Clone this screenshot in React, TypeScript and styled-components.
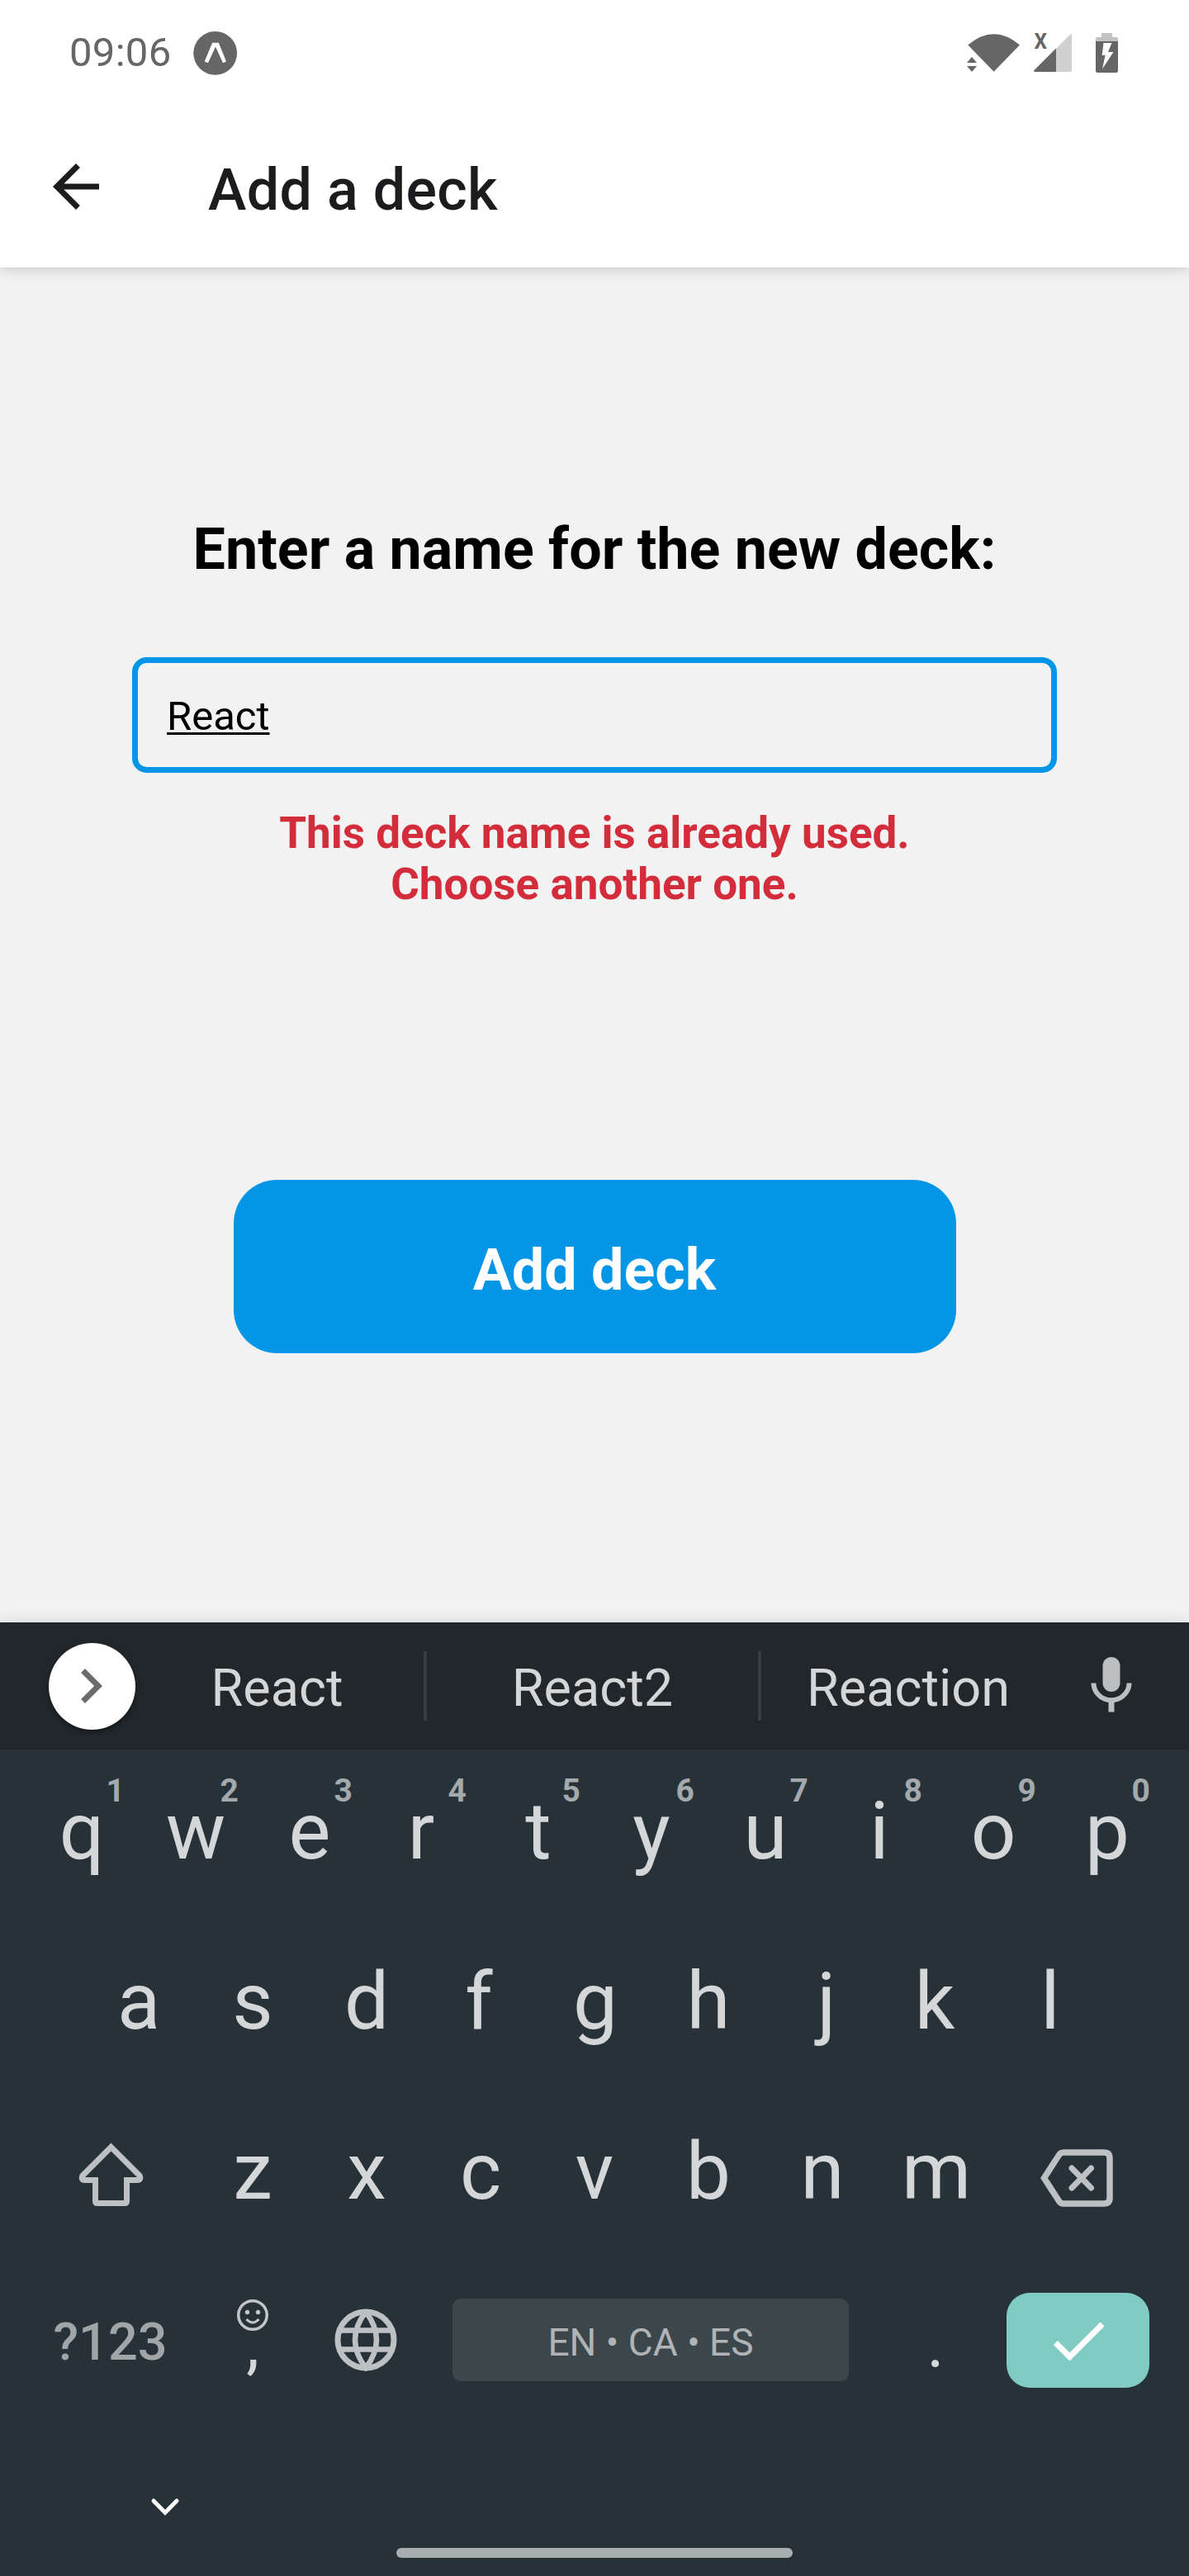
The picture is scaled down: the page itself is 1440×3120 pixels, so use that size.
import React from "react";
import styled, { createGlobalStyle } from "styled-components";

const Global = createGlobalStyle`
  * { box-sizing: border-box; }
  body { margin: 0; background: #f2f2f2; }
  button { border: 0; padding: 0; background: none; font: inherit; color: inherit; }
`;

const Screen = styled.div`
  width: 1440px;
  height: 3120px;
  display: flex;
  flex-direction: column;
  background: #f2f2f2;
  font-family: Roboto, "Liberation Sans", sans-serif;
  color: #000;
  overflow: hidden;
`;

const TopArea = styled.div`
  background: #fff;
  height: 324px;
  flex: none;
  z-index: 1;
  box-shadow: 0 4px 14px rgba(0, 0, 0, 0.13), 0 0 3px rgba(0, 0, 0, 0.08);
`;

const StatusBar = styled.div`
  height: 128px;
  padding: 0 80px 0 84px;
  display: flex;
  align-items: center;
  justify-content: space-between;
  color: #666;
`;

const StatusGroup = styled.div<{ $gap: number }>`
  display: flex;
  align-items: center;
  gap: ${(p) => p.$gap}px;
`;

const Clock = styled.span`
  font-size: 49px;
  line-height: 58px;
  width: 122px;
  letter-spacing: 0.3px;
  white-space: nowrap;
`;

const Header = styled.header`
  height: 196px;
  display: flex;
  align-items: center;
  padding: 0 50px 0 50px;
  gap: 118px;
`;

const Title = styled.h1`
  margin: 8px 0 0;
  font-size: 70px;
  line-height: 82px;
  font-weight: 500;
  letter-spacing: 0.3px;
  color: #1c1c1e;
`;

const Form = styled.main`
  flex: 1;
  display: flex;
  flex-direction: column;
  align-items: center;
  padding-top: 300px;
`;

const Prompt = styled.h2`
  margin: 0;
  font-size: 70px;
  line-height: 82px;
  font-weight: 700;
  white-space: nowrap;
`;

const NameField = styled.div`
  margin-top: 90px;
  width: 1120px;
  height: 140px;
  border: 7px solid #0396e6;
  border-radius: 17.5px;
  padding: 4px 35px 0;
  display: flex;
  align-items: center;
  font-size: 49px;
  line-height: 58px;
  span {
    text-decoration: underline;
    text-decoration-thickness: 3px;
    text-underline-offset: 3px;
    text-decoration-skip-ink: none;
  }
`;

const ErrorText = styled.p`
  margin: 42px 0 0;
  font-size: 53px;
  line-height: 62px;
  font-weight: 700;
  text-align: center;
  color: #d32d3c;
`;

const SubmitButton = styled.button`
  margin-top: 327px;
  width: 875px;
  height: 210px;
  border-radius: 52.5px;
  background: #0396e6;
  color: #fff;
  font-size: 70px;
  line-height: 82px;
  font-weight: 700;
  padding-top: 7px;
`;

const Keyboard = styled.section`
  height: 1155px;
  flex: none;
  display: flex;
  flex-direction: column;
  background: #263238;
  color: #d4d6d8;
  box-shadow: 0 0 18px rgba(0, 0, 0, 0.12);
`;

const Strip = styled.div`
  height: 154px;
  flex: none;
  display: flex;
  align-items: center;
  background: #21272b;
  padding-left: 59px;
`;

const ExpandButton = styled.button`
  width: 105px;
  height: 105px;
  border-radius: 50%;
  background: #fff;
  box-shadow: 0 3px 6px rgba(0, 0, 0, 0.4);
  display: flex;
  align-items: center;
  justify-content: center;
  padding-right: 4px;
`;

const Suggestion = styled.div<{ $width: number; $trail?: number }>`
  width: ${(p) => p.$width}px;
  text-align: center;
  font-size: 63px;
  line-height: 74px;
  padding: 5px ${(p) => p.$trail ?? 0}px 0 0;
`;

const Divider = styled.div`
  width: 4px;
  height: 84px;
  background: #373d40;
`;

const MicButton = styled.button`
  margin-left: 26px;
  height: 84px;
  svg { display: block; }
`;

const Row = styled.div<{ $inset: number }>`
  height: 206px;
  flex: none;
  display: flex;
  padding: 0 ${(p) => p.$inset}px;
`;

const Key = styled.button`
  position: relative;
  width: 138px;
  height: 206px;
  flex: none;
  display: flex;
  align-items: center;
  justify-content: center;
`;

const LetterKey = styled(Key)<{ $nudge: number }>`
  font-size: 96px;
  line-height: 112px;
  padding-bottom: 8px;
  padding-left: ${(p) => Math.max(0, p.$nudge) * 2}px;
  padding-right: ${(p) => Math.max(0, -p.$nudge) * 2}px;
`;

const Hint = styled.span`
  position: absolute;
  right: 17px;
  top: 27px;
  font-size: 39px;
  line-height: 46px;
  font-weight: 700;
  color: #a3a9ac;
`;

const ShiftKey = styled(Key)`
  width: 207px;
`;

const BackspaceKey = styled(Key)`
  width: 207px;
  padding: 7px 5px 0 0;
`;

const SymbolsKey = styled(Key)`
  width: 207px;
  padding-bottom: 7px;
  font-size: 63px;
  line-height: 74px;
  font-weight: 500;
  color: #a0a5a7;
`;

const CommaKey = styled(Key)`
  flex-direction: column;
  font-size: 80px;
  line-height: 34px;
  justify-content: flex-start;
  padding-top: 48px;
`;

const GlobeKey = styled(Key)`
  padding: 0 2px 12px 0;
`;

const PeriodKey = styled(Key)`
  font-size: 80px;
  line-height: 94px;
`;

const SpaceBar = styled.button`
  width: 480px;
  height: 100px;
  margin: 47px 36px 0 35px;
  padding-top: 5px;
  border-radius: 10px;
  background: #3c474c;
  color: #b0b4b7;
  font-size: 46px;
  line-height: 54px;
`;

const EnterKey = styled.button`
  width: 173px;
  height: 115px;
  margin: 40px 0 0 17px;
  border-radius: 28px;
  background: #80cbc4;
  display: flex;
  align-items: center;
  justify-content: center;
`;

const NavArea = styled.div`
  flex: 1;
  display: flex;
  flex-direction: column;
  justify-content: space-between;
  padding: 82px 0 22px;
`;

const HideButton = styled.button`
  width: 36px;
  margin-left: 182px;
  svg { display: block; }
`;

const HomeHandle = styled.div`
  width: 480px;
  height: 12px;
  margin: 0 auto;
  border-radius: 6px;
  background: #a8adaf;
`;

const AppBadge = () => (
  <svg width="54" height="54" viewBox="0 0 54 54">
    <circle cx="26.7" cy="27.3" r="26.4" fill="#666" />
    <path d="M23.2 14.7 H30.8 L40 37.5 L36 39.3 L27 19.5 L18 39.3 L13.7 37.5 Z" fill="#fff" />
  </svg>
);

const StatusIcons = () => (
  <svg width="190" height="68" viewBox="1170 30 190 68" fill="#666">
    <path d="M1172.3 54.5 Q1203.7 27.8 1235 54.5 L1203.6 86.7 Z" />
    <path d="M1171 76 L1177 69 L1183 76 Z M1171 80 H1183 L1177 87 Z" />
    <path d="M1298 43 V84.500 Q1298 87 1295.500 87 H1279 V59 L1296 41.800 Q1298 40.200 1298 43Z" fill="#d0d0d0" />
    <path d="M1279 58.500 V87 H1254 Q1251 87 1252.500 85 Z" />
    <text x="1252.500" y="59" fontSize="25" fontWeight="700" textLength="15.500" lengthAdjust="spacingAndGlyphs">X</text>
    <path d="M1327 50 V47 Q1327 45 1329 45 H1334 V40 H1347 V45 H1352 Q1354 45 1354 47 V50Z" fill="#c2c2c2" />
    <path d="M1327 50 H1354 V85.500 Q1354 88 1351.500 88 H1329.500 Q1327 88 1327 85.500Z" />
    <path d="M1336.500 52 H1346.500 L1342 63 H1348.500 L1335 83.500 L1338.500 67 H1334.700Z" fill="#fff" />
  </svg>
);

const BackIcon = () => (
  <svg width="84" height="84" viewBox="0 0 24 24" fill="#1c1c1e">
    <path d="M20 11H7.830l5.590-5.590L12 4l-8 8 8 8 1.410-1.410L7.830 13H20v-2z" />
  </svg>
);

const ChevronRight = () => (
  <svg width="84" height="84" viewBox="0 0 24 24" fill="#6b6b6b">
    <path d="M10 6 8.590 7.410 13.170 12l-4.580 4.590L10 18l6-6z" />
  </svg>
);

const MicIcon = () => (
  <svg width="84" height="84" viewBox="0 0 24 24" fill="#bcbfc1">
    <path d="M12 14c1.660 0 3-1.340 3-3V5c0-1.660-1.340-3-3-3S9 3.340 9 5v6c0 1.660 1.340 3 3 3z" />
    <path d="M17.300 11c0 3-2.540 5.100-5.300 5.100S6.700 14 6.700 11H5c0 3.410 2.720 6.230 6 6.720V21h2v-3.280c3.280-.480 6-3.300 6-6.720h-1.700z" />
  </svg>
);

const ShiftIcon = () => (
  <svg width="80" height="80" viewBox="0 0 80 80" fill="none" stroke="#bdc1c4" strokeWidth="7">
    <path d="M40.500 6.500 L75 41 Q77.500 46.500 72 46.500 H59.500 V72 Q59.500 74.500 57 74.500 H24 Q21.500 74.500 21.500 72 V46.500 H9 Q3.500 46.500 6 41 Z" />
  </svg>
);

const BackspaceIcon = () => (
  <svg width="88" height="72" viewBox="0 0 88 72" fill="none" stroke="#bdc1c4" strokeWidth="7.500">
    <path d="M4.500 36 L22 9 Q24 5 28 5 H77 Q84 5 84 12 V60 Q84 67 77 67 H28 Q24 67 22 63 Z" />
    <path d="M38 24 L61.500 48 M61.500 24 L38 48" strokeWidth="7" strokeLinecap="round" />
  </svg>
);

const SmileyIcon = () => (
  <svg width="38" height="38" viewBox="0 0 38 38" fill="none" stroke="#c3c6c9" strokeWidth="3.500">
    <circle cx="19" cy="19" r="17.250" />
    <circle cx="12.500" cy="15.500" r="2.700" fill="#c3c6c9" stroke="none" />
    <circle cx="25.500" cy="15.500" r="2.700" fill="#c3c6c9" stroke="none" />
    <path d="M11.500 24 Q19 32 26.500 24" strokeWidth="3" />
  </svg>
);

const GlobeIcon = () => (
  <svg width="76" height="76" viewBox="0 0 76 76" fill="none" stroke="#bdc1c4" strokeWidth="7">
    <circle cx="38" cy="38" r="34" />
    <path d="M38 4 Q12 38 38 72 Q64 38 38 4 M7 26.500 H69 M7 49.500 H69" strokeWidth="6.500" />
  </svg>
);

const CheckIcon = () => (
  <svg width="84" height="84" viewBox="0 0 24 24" fill="#fff">
    <path d="M9 16.170 4.830 12l-1.420 1.410L9 19 21 7l-1.410-1.410z" />
  </svg>
);

const ChevronDown = () => (
  <svg width="36" height="24" viewBox="0 0 36 24" fill="none" stroke="#fff" strokeWidth="5" strokeLinecap="round">
    <path d="M4 4 L18 18.200 L32 4" />
  </svg>
);

// Optical centring for letters with uneven side bearings.
const nudges: Record<string, number> = { r: -3, t: 1, f: -2, g: 1, j: 5, k: -2 };

const Letters = ({ keys, hints }: { keys: string; hints?: string }) => (
  <>
    {keys.split("").map((letter, i) => (
      <LetterKey key={letter} $nudge={nudges[letter] ?? 0}>
        {letter}
        {hints && <Hint>{hints[i]}</Hint>}
      </LetterKey>
    ))}
  </>
);

export default function App() {
  return (
    <Screen>
      <Global />
      <TopArea>
        <StatusBar>
          <StatusGroup $gap={28}>
            <Clock>09:06</Clock>
            <AppBadge />
          </StatusGroup>
          <StatusIcons />
        </StatusBar>
        <Header>
          <BackIcon />
          <Title>Add a deck</Title>
        </Header>
      </TopArea>
      <Form>
        <Prompt>Enter a name for the new deck:</Prompt>
        <NameField>
          <span>React</span>
        </NameField>
        <ErrorText>
          This deck name is already used.
          <br />
          Choose another one.
        </ErrorText>
        <SubmitButton>Add deck</SubmitButton>
      </Form>
      <Keyboard>
        <Strip>
          <ExpandButton>
            <ChevronRight />
          </ExpandButton>
          <Suggestion $width={349} $trail={6}>React</Suggestion>
          <Divider />
          <Suggestion $width={401}>React2</Suggestion>
          <Divider />
          <Suggestion $width={356}>Reaction</Suggestion>
          <MicButton>
            <MicIcon />
          </MicButton>
        </Strip>
        <Row $inset={30}>
          <Letters keys="qwertyuiop" hints="1234567890" />
        </Row>
        <Row $inset={99}>
          <Letters keys="asdfghjkl" />
        </Row>
        <Row $inset={30}>
          <ShiftKey>
            <ShiftIcon />
          </ShiftKey>
          <Letters keys="zxcvbnm" />
          <BackspaceKey>
            <BackspaceIcon />
          </BackspaceKey>
        </Row>
        <Row $inset={30}>
          <SymbolsKey>?123</SymbolsKey>
          <CommaKey>
            <SmileyIcon />
            <span>,</span>
          </CommaKey>
          <GlobeKey>
            <GlobeIcon />
          </GlobeKey>
          <SpaceBar>EN • CA • ES</SpaceBar>
          <PeriodKey>.</PeriodKey>
          <EnterKey>
            <CheckIcon />
          </EnterKey>
        </Row>
        <NavArea>
          <HideButton>
            <ChevronDown />
          </HideButton>
          <HomeHandle />
        </NavArea>
      </Keyboard>
    </Screen>
  );
}
